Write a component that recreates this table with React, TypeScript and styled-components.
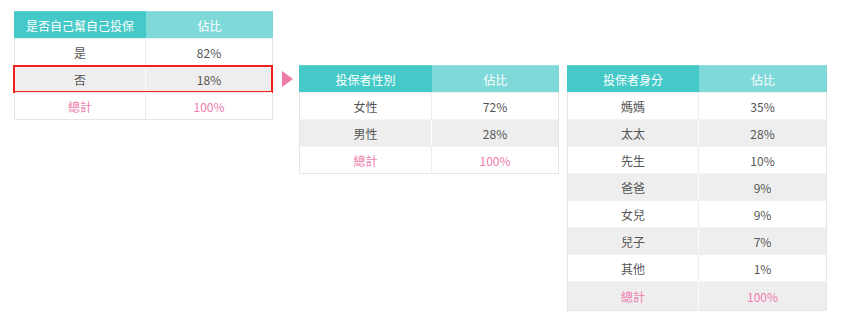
import React, { FC } from "react";
import styled, { createGlobalStyle } from "styled-components";

type Row = { label: string; value: string; shade?: boolean; total?: boolean; marked?: boolean };

interface RatioTableProps {
  title: string;
  rows: Row[];
  labelWidth: number;
  width: number;
}

const GlobalStyle = createGlobalStyle`
  body {
    margin: 0;
    background: #ffffff;
    font-family: "Noto Sans CJK TC", "Noto Sans", sans-serif;
  }
`;

const RatioTable: FC<RatioTableProps> = ({ title, rows, labelWidth, width }) => {
  return (
    <Table $width={width}>
      <HeadRow $labelWidth={labelWidth}>
        <HeadCell>{title}</HeadCell>
        <HeadCell $light>佔比</HeadCell>
      </HeadRow>
      {rows.map((row) => (
        <BodyRow
          key={row.label}
          $labelWidth={labelWidth}
          $shade={!!row.shade}
          $marked={!!row.marked}
          $tall={!!row.total && !!row.shade}
        >
          <Cell $shade={!!row.shade} $total={!!row.total} $divider>
            {row.label}
          </Cell>
          <Cell $shade={!!row.shade} $total={!!row.total}>
            {row.value}
          </Cell>
        </BodyRow>
      ))}
    </Table>
  );
};

const App: FC = () => {
  return (
    <Page>
      <GlobalStyle />
      <RatioTable
        title="是否自己幫自己投保"
        labelWidth={132}
        width={259}
        rows={[
          { label: "是", value: "82%" },
          { label: "否", value: "18%", shade: true, marked: true },
          { label: "總計", value: "100%", total: true },
        ]}
      />
      <Arrow />
      <Tables>
        <RatioTable
          title="投保者性別"
          labelWidth={133}
          width={260}
          rows={[
            { label: "女性", value: "72%" },
            { label: "男性", value: "28%", shade: true },
            { label: "總計", value: "100%", total: true },
          ]}
        />
        <RatioTable
          title="投保者身分"
          labelWidth={132}
          width={260}
          rows={[
            { label: "媽媽", value: "35%" },
            { label: "太太", value: "28%", shade: true },
            { label: "先生", value: "10%" },
            { label: "爸爸", value: "9%", shade: true },
            { label: "女兒", value: "9%" },
            { label: "兒子", value: "7%", shade: true },
            { label: "其他", value: "1%" },
            { label: "總計", value: "100%", total: true, shade: true },
          ]}
        />
      </Tables>
    </Page>
  );
};

const Page = styled("div")({
  display: "flex",
  alignItems: "flex-start",
  padding: "11px 0 0 14px",
});

const Tables = styled("div")({
  display: "flex",
  alignItems: "flex-start",
  gap: "8px",
  marginTop: "54px",
});

const Arrow = styled("div")({
  width: 0,
  height: 0,
  margin: "60px 6px 0 9px",
  borderTop: "8px solid transparent",
  borderBottom: "8px solid transparent",
  borderLeft: "11px solid #ee7aa8",
});

const Table = styled("div")<{ $width: number }>(({ $width }) => ({
  boxSizing: "border-box",
  width: `${$width}px`,
  display: "flex",
  flexDirection: "column",
  border: "1px solid #e6e6e6",
  borderTop: "none",
}));

const HeadRow = styled("div")<{ $labelWidth: number }>(({ $labelWidth }) => ({
  display: "grid",
  gridTemplateColumns: `${$labelWidth}px 1fr`,
  height: "27px",
  margin: "0 -1px",
}));

const HeadCell = styled("div")<{ $light?: boolean }>(({ $light }) => ({
  display: "flex",
  alignItems: "center",
  justifyContent: "center",
  background: $light ? "#80d9d9" : "#44c9c8",
  borderTop: `1px solid ${$light ? "#93e0e0" : "#5fd1d0"}`,
  color: "#ffffff",
  fontSize: "12px",
  fontWeight: 400,
}));

const BodyRow = styled("div")<{ $labelWidth: number; $shade: boolean; $marked: boolean; $tall: boolean }>(
  ({ $labelWidth, $shade, $marked, $tall }) => ({
    position: "relative",
    display: "grid",
    gridTemplateColumns: `${$labelWidth - 1}px 1fr`,
    height: $tall ? "28px" : "26px",
    background: $shade ? "#eeeeee" : "#ffffff",
    borderTop: `1px solid ${$shade ? "#f4f4f4" : "#efefef"}`,
    "&::after": $marked
      ? {
          content: '""',
          position: "absolute",
          top: "-1px",
          bottom: "-1px",
          left: "-2px",
          right: "-1px",
          border: "2px solid #f01e1e",
          pointerEvents: "none",
        }
      : {},
  })
);

const Cell = styled("div")<{ $shade: boolean; $total: boolean; $divider?: boolean }>(
  ({ $shade, $total, $divider }) => ({
    display: "flex",
    alignItems: "center",
    justifyContent: "center",
    borderRight: $divider ? `1px solid ${$shade ? "#fbfbfb" : "#ececec"}` : "none",
    color: $total ? "#ef7cae" : "#555555",
    fontSize: "12px",
  })
);

export default App;
